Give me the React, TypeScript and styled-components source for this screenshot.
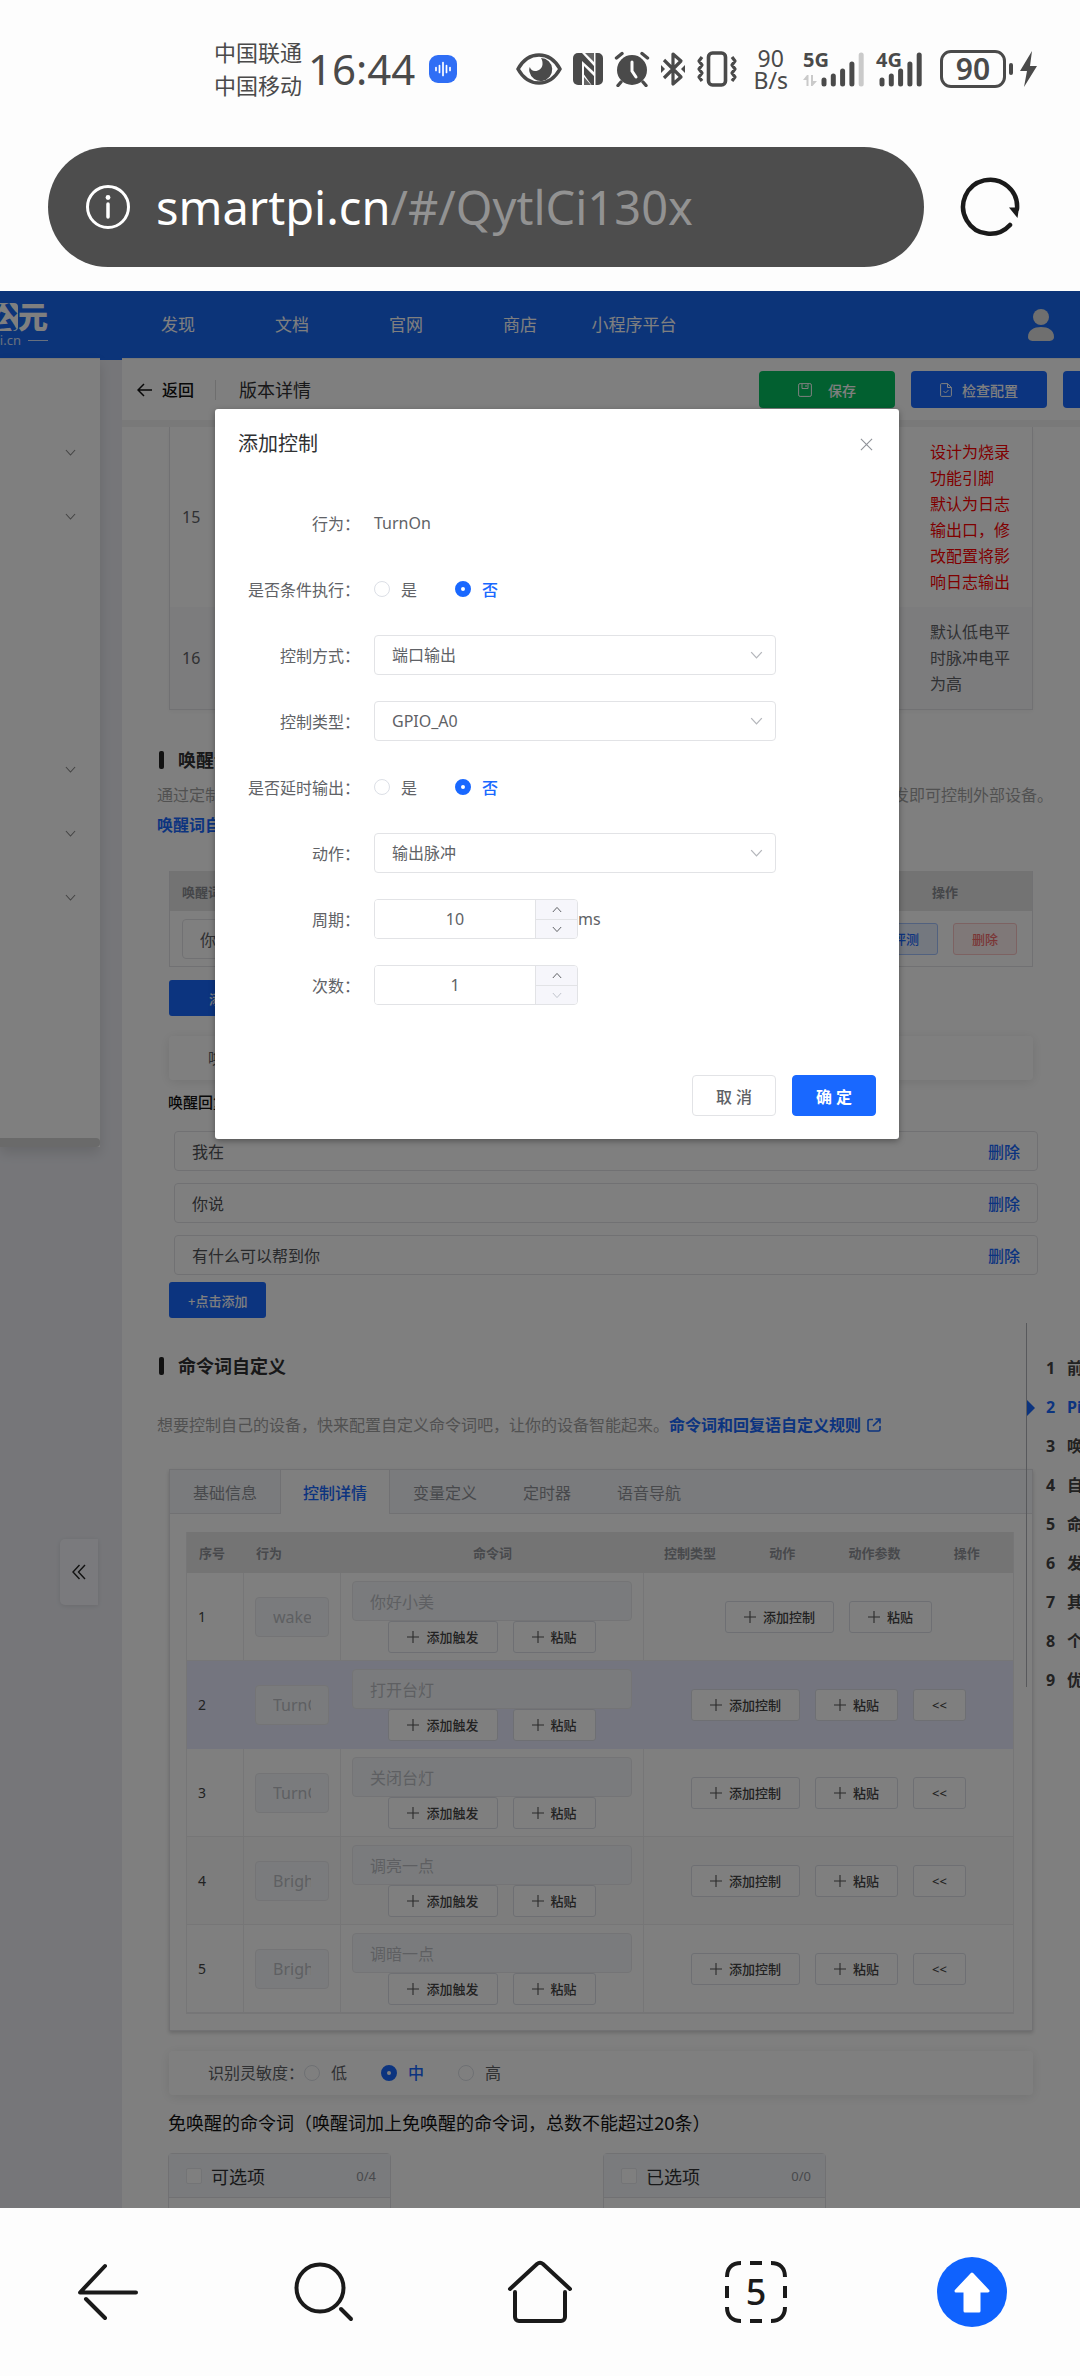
import React, { useState } from "react";
import styled, { createGlobalStyle, css } from "styled-components";

const color = {
  brand: "#1968ff",
  header: "#1868f2",
  text: "#606266",
  dark: "#303133",
  muted: "#a3a3a3",
  line: "#e2e3e6",
  page: "#ecedf3",
  status: "#4a4a4a",
};

const GlobalStyle = createGlobalStyle`
  *, *::before, *::after { box-sizing: border-box; }
  body { margin: 0; background: #fdfdfd; }
  body, button, input, select {
    font-family: "Noto Sans", "Noto Sans CJK SC", sans-serif;
  }
  button { margin: 0; padding: 0; border: 0; background: none; cursor: pointer; }
  table { border-spacing: 0; }
  a { color: inherit; text-decoration: none; }
`;

/* ---------- shell ---------- */

const Shell = styled.div`
  height: 100vh;
  display: flex;
  flex-direction: column;
  background: #fdfdfd;
  overflow: hidden;
`;

const StatusBar = styled.header`
  display: flex;
  align-items: center;
  justify-content: space-between;
  padding: 36px 42px 0 214px;
  height: 102px;
  color: ${color.status};
`;

const StatusGroup = styled.div<{ $gap: number }>`
  display: flex;
  align-items: center;
  gap: ${(p) => p.$gap}px;
`;

const Carriers = styled.div`
  font-size: 22px;
  line-height: 33px;
  white-space: nowrap;
`;

const Clock = styled.time`
  font-size: 42px;
  line-height: 48px;
  margin: 0 14px 0 6px;
`;

const Speed = styled.div`
  font-size: 23px;
  line-height: 22px;
  text-align: center;
  margin: 0 5px;
`;

const Signal = styled.div<{ $width: number }>`
  display: grid;
  width: ${(p) => p.$width}px;
  height: 36px;
  & > * { grid-area: 1 / 1; }
  & > span {
    font-size: 20px;
    font-weight: 700;
    line-height: 18px;
  }
`;

const Battery = styled.div`
  width: 66px;
  height: 38px;
  margin-left: 8px;
  border: 3px solid ${color.status};
  border-radius: 11px;
  font-size: 30px;
  font-weight: 600;
  line-height: 32px;
  text-align: center;
`;

const AddressRow = styled.div`
  display: flex;
  align-items: center;
  gap: 36px;
  padding: 45px 60px 24px 48px;
`;

const Address = styled.div`
  flex: 1;
  display: flex;
  align-items: center;
  gap: 25px;
  height: 120px;
  padding: 0 37px;
  border-radius: 60px;
  background: #4d4d4d;
  color: #fff;
  font-size: 47px;
  line-height: 60px;
  span { color: #929292; }
`;

const IconButton = styled.button`
  display: grid;
  place-items: center;
  line-height: 0;
`;

const BottomBar = styled.nav`
  display: grid;
  grid-template-columns: repeat(5, 1fr);
  height: 168px;
  flex: none;
  background: #fdfdfd;
`;

const TabCount = styled(IconButton)`
  color: #1a1a1a;
  font-size: 36px;
  font-weight: 500;
  line-height: 62px;
  & > * { grid-area: 1 / 1; }
`;

/* ---------- web page ---------- */

const WebView = styled.div`
  position: relative;
  flex: 1;
  min-height: 0;
  overflow: hidden;
  background: ${color.page};
`;

const SiteHeader = styled.div`
  display: flex;
  align-items: center;
  height: 67px;
  padding-right: 26px;
  background: ${color.header};
  color: #fff;
`;

const Logo = styled.div`
  width: 48px;
  margin-right: 73px;
  overflow: hidden;
`;

const LogoName = styled.div`
  display: flex;
  justify-content: flex-end;
  align-items: center;
  font-size: 30px;
  font-weight: 900;
  line-height: 32px;
  white-space: nowrap;
  mark {
    background: #fff;
    color: ${color.header};
    border-radius: 4px;
    line-height: 28px;
  }
`;

const LogoUrl = styled.div`
  display: flex;
  justify-content: flex-end;
  align-items: center;
  gap: 7px;
  font-size: 13px;
  line-height: 15px;
  opacity: 0.8;
  &::after {
    content: "";
    flex: none;
    width: 20px;
    height: 1px;
    background: #fff;
  }
`;

const SiteNav = styled.nav`
  display: flex;
  flex: 1;
  a {
    width: 114px;
    text-align: center;
    font-size: 17px;
    line-height: 24px;
    white-space: nowrap;
  }
`;

const Columns = styled.div`
  display: flex;
  align-items: flex-start;
`;

const Side = styled.aside`
  width: 100px;
  flex: none;
  background: #fff;
  padding-top: 62px;
  border-top: 1px solid #eee;
  box-shadow: 0 6px 12px rgba(0, 0, 0, 0.12);
`;

const SideItem = styled.button`
  display: flex;
  align-items: center;
  justify-content: flex-end;
  width: 100%;
  height: 64px;
  padding-right: 24px;
`;

const SideSubmenu = styled.div`
  height: 189px;
`;

const SideScroll = styled.div`
  height: 9px;
  margin-top: 208px;
  background: #d4d4d4;
  border-radius: 0 4px 4px 0;
`;

const Gutter = styled.div`
  width: 22px;
  flex: none;
  border-top: 2px solid ${color.header};
`;

const Main = styled.main`
  flex: 1;
  min-width: 0;
  background: #fff;
`;

const Toolbar = styled.div`
  display: flex;
  align-items: center;
  height: 62px;
  padding-left: 15px;
  border-top: 1px solid #eef1f3;
  color: #111;
  overflow: hidden;
`;

const Back = styled.a`
  display: flex;
  align-items: center;
  gap: 10px;
  padding-right: 21px;
  border-right: 1px solid #ddd;
  font-size: 16px;
  font-weight: 500;
  line-height: 20px;
`;

const PageName = styled.div`
  flex: 1;
  margin-left: 23px;
  font-size: 18px;
  line-height: 24px;
  color: ${color.dark};
`;

const ToolButton = styled.button<{ $tone: string; $gap: number }>`
  display: flex;
  align-items: center;
  justify-content: center;
  flex: none;
  gap: ${(p) => p.$gap}px;
  width: 136px;
  height: 37px;
  margin-right: 16px;
  border-radius: 4px;
  background: ${(p) => p.$tone};
  color: #fff;
  font-size: 14px;
  font-weight: 500;
`;

const ToolButtons = styled.div`
  display: flex;
  flex: none;
  width: 321px;
`;

const Content = styled.div`
  padding-left: 35px;
  border-top: 7px solid #f3f3f3;
`;

const Block = styled.div<{ $top: number }>`
  margin: ${(p) => p.$top}px 47px 0 12px;
`;

const PinTable = styled.table`
  width: 100%;
  border: 1px solid ${color.line};
  border-top: 0;
  box-shadow: 0 2px 4px rgba(0, 0, 0, 0.04);
  font-size: 16px;
  line-height: 26px;
  color: ${color.text};
  td { padding: 12px; }
  td:first-child { padding-left: 12px; }
  td:last-child { width: 114px; }
  tr:last-child td { background: #f8f8fa; }
`;

const Warning = styled.div`
  color: #ff0000;
`;

const Heading = styled.h2<{ $top: number }>`
  display: flex;
  align-items: center;
  gap: 14px;
  margin: ${(p) => p.$top}px 0 0 2px;
  font-size: 18px;
  font-weight: 700;
  line-height: 26px;
  color: ${color.dark};
  &::before {
    content: "";
    width: 5px;
    height: 18px;
    border-radius: 2px;
    background: #222;
  }
`;

const Intro = styled.p<{ $top: number }>`
  margin: ${(p) => p.$top}px 0 0;
  font-size: 16px;
  line-height: 26px;
  white-space: nowrap;
  color: ${color.muted};
`;

const DocLink = styled.a`
  display: inline-flex;
  align-items: center;
  gap: 6px;
  color: ${color.brand};
  font-size: 16px;
  font-weight: 700;
  line-height: 26px;
`;

const WakeTable = styled.table`
  width: 100%;
  border: 1px solid ${color.line};
  border-top: 0;
  table-layout: fixed;
  th {
    height: 40px;
    padding: 0 12px;
    background: #e6e6e6;
    color: #8a8d92;
    font-size: 13px;
    font-weight: 700;
    text-align: left;
  }
  th:last-child { text-align: center; width: 174px; }
  td { height: 55px; padding: 0 12px; }
`;

const WakeActions = styled.div`
  display: flex;
  justify-content: flex-end;
  gap: 15px;
  padding-right: 3px;
`;

const TagButton = styled.button<{ $danger?: boolean }>`
  width: 64px;
  height: 32px;
  border: 1px solid ${(p) => (p.$danger ? "#fbc4c4" : "#a3c3ff")};
  border-radius: 3px;
  background: ${(p) => (p.$danger ? "#fef0f0" : "#e8f0ff")};
  color: ${(p) => (p.$danger ? "#f56c6c" : color.brand)};
  font-size: 13px;
  font-weight: 500;
`;

const field = css`
  height: 40px;
  border: 1px solid ${color.line};
  border-radius: 4px;
  padding: 0 17px;
  background: #fff;
  color: ${color.text};
  font-size: 16px;
  outline: none;
`;

const TextInput = styled.input`
  ${field}
  display: block;
  width: 100%;
  &:disabled {
    background: #f5f7fa;
    color: #bcbfc5;
    border-color: #e8e9ec;
  }
`;

const Primary = styled.button<{ $pad: number }>`
  display: block;
  height: 36px;
  padding: 0 ${(p) => p.$pad}px;
  border-radius: 3px;
  background: ${color.brand};
  color: #fff;
  font-size: 13px;
  font-weight: 500;
`;

const Panel = styled.div`
  display: flex;
  align-items: center;
  height: 44px;
  padding-left: 39px;
  border-radius: 4px;
  background: #fff;
  box-shadow: 0 2px 12px rgba(0, 0, 0, 0.1);
  font-size: 16px;
  line-height: 24px;
  color: ${color.text};
`;

const ReplyLabel = styled.div`
  margin: 10px 0 17px 11px;
  font-size: 15px;
  font-weight: 500;
  line-height: 24px;
  color: #111;
`;

const Replies = styled.div`
  display: flex;
  flex-direction: column;
  gap: 12px;
  margin: 0 42px 7px 17px;
`;

const Reply = styled.div`
  ${field}
  display: flex;
  align-items: center;
  justify-content: space-between;
  color: #505256;
`;

const TextButton = styled.button`
  color: ${color.brand};
  font-size: 16px;
  font-weight: 500;
`;

const TabCard = styled.div`
  border: 1px solid ${color.line};
  background: #fff;
  box-shadow: 0 2px 4px rgba(0, 0, 0, 0.18);
`;

const TabBar = styled.div`
  display: flex;
  height: 44px;
  background: #f5f7fa;
  border-bottom: 1px solid ${color.line};
`;

const Tab = styled.button<{ $active: boolean }>`
  height: 44px;
  padding: 0 22px;
  border: solid transparent;
  border-width: 0 1px;
  font-size: 16px;
  color: #909399;
  ${(p) =>
    p.$active &&
    css`
      background: #fff;
      border-color: ${color.line};
      color: ${color.brand};
      font-weight: 500;
    `}
`;

const TabBody = styled.div`
  padding: 18px 18px 16px 16px;
`;

const CommandTable = styled.table`
  width: 100%;
  table-layout: fixed;
  border: 1px solid #ececef;
  border-top: 0;
  th {
    height: 41px;
    padding: 0;
    background: #e9e9e9;
    color: #909399;
    font-size: 13px;
    font-weight: 700;
    text-align: center;
  }
  th:nth-child(-n + 2) {
    padding-left: 12px;
    text-align: left;
  }
  td {
    height: 88px;
    padding: 0 11px;
    border-right: 1px solid #ececef;
    border-bottom: 1px solid #ececef;
    font-size: 14px;
    color: #444;
  }
  td:last-child { border-right: 0; }
  tbody tr:nth-child(4) td { background: #fafafa; }
`;

const Row = styled.tr<{ $selected: boolean }>`
  ${(p) =>
    p.$selected &&
    css`
      td { background: #e9ebff; border-color: #e9ebff; }
    `}
`;

const Buttons = styled.div`
  display: flex;
  justify-content: center;
  gap: 15px;
`;

const MiniButton = styled.button`
  display: flex;
  align-items: center;
  gap: 7px;
  height: 32px;
  padding: 0 18px;
  border: 1px solid #dcdfe6;
  border-radius: 3px;
  background: #fff;
  color: #444;
  font-size: 13px;
  font-weight: 500;
  white-space: nowrap;
`;

const FreeTitle = styled.div`
  margin: 15px 0 17px 11px;
  font-size: 18px;
  line-height: 26px;
  color: #111;
`;

const Transfer = styled.div`
  display: flex;
  gap: 212px;
  margin-left: 11px;
`;

const TransferBox = styled.section`
  width: 223px;
  height: 300px;
  border: 1px solid ${color.line};
  border-radius: 4px;
`;

const TransferHead = styled.label`
  display: flex;
  align-items: center;
  height: 44px;
  padding: 0 14px 0 17px;
  background: #f5f7fa;
  border-bottom: 1px solid ${color.line};
  font-size: 18px;
  color: ${color.dark};
  input {
    appearance: none;
    width: 16px;
    height: 16px;
    margin: 0 9px 0 0;
    border: 1px solid #e6e8ec;
    border-radius: 2px;
    background: #fff;
  }
  span {
    margin-left: auto;
    font-size: 13px;
    color: #909399;
  }
`;

const Collapse = styled.button`
  position: absolute;
  left: 60px;
  top: 1248px;
  width: 38px;
  height: 66px;
  display: grid;
  place-items: center;
  border-radius: 5px 0 0 5px;
  background: #f4f5fa;
  box-shadow: 0 1px 5px rgba(0, 0, 0, 0.1);
`;

const Toc = styled.nav`
  position: absolute;
  top: 1032px;
  left: calc(100% - 54px);
  width: 260px;
  height: 364px;
  padding: 26px 0 0 19px;
  border-left: 1px solid #b0b3b8;
  display: flex;
  flex-direction: column;
`;

const TocLink = styled.a<{ $active: boolean }>`
  position: relative;
  display: grid;
  grid-template-columns: 21px 1fr;
  font-size: 16px;
  font-weight: 700;
  line-height: 39px;
  color: ${(p) => (p.$active ? color.brand : "#444")};
  ${(p) =>
    p.$active &&
    css`
      &::before {
        content: "";
        position: absolute;
        left: -19px;
        top: 12px;
        border: 8px solid transparent;
        border-left-color: ${color.brand};
        border-right: 0;
      }
    `}
`;

/* ---------- dialog ---------- */

const Overlay = styled.div`
  position: absolute;
  inset: 0;
  display: flex;
  justify-content: center;
  align-items: flex-start;
  padding: 118px 0 0 34px;
  background: rgba(0, 0, 0, 0.5);
`;

const Dialog = styled.div`
  width: 684px;
  max-width: 100%;
  padding: 20px 23px 23px;
  border-radius: 3px;
  background: #fff;
  box-shadow: 0 2px 6px rgba(0, 0, 0, 0.35);
`;

const DialogHead = styled.div`
  display: flex;
  align-items: center;
  justify-content: space-between;
  height: 30px;
  padding-right: 3px;
  font-size: 20px;
  line-height: 30px;
  color: ${color.dark};
`;

const Form = styled.form`
  display: flex;
  flex-direction: column;
  gap: 26px;
  padding: 44px 100px 70px 0;
`;

const FormRow = styled.div`
  display: grid;
  grid-template-columns: 122px 1fr;
  column-gap: 14px;
  align-items: center;
  height: 40px;
  font-size: 16px;
  color: ${color.text};
`;

const RowLabel = styled.label`
  text-align: right;
  white-space: nowrap;
`;

const RadioGroup = styled.div<{ $gap: number }>`
  display: flex;
  align-items: center;
  gap: ${(p) => p.$gap}px;
`;

const RadioLabel = styled.label<{ $checked: boolean }>`
  display: flex;
  align-items: center;
  gap: 11px;
  color: ${(p) => (p.$checked ? color.brand : color.text)};
  font-weight: ${(p) => (p.$checked ? 500 : 400)};
`;

const Radio = styled.input`
  appearance: none;
  width: 16px;
  height: 16px;
  margin: 0;
  border: 1px solid #dcdfe6;
  border-radius: 50%;
  background: #fff;
  &:checked { border: 6px solid ${color.brand}; }
`;

const SelectBox = styled.div`
  display: grid;
  align-items: center;
  & > * { grid-area: 1 / 1; }
  svg {
    justify-self: end;
    margin-right: 13px;
    pointer-events: none;
  }
`;

const Select = styled.select`
  ${field}
  width: 100%;
  appearance: none;
`;

const NumberRow = styled.div`
  display: flex;
  align-items: center;
`;

const NumberBox = styled.div`
  display: grid;
  grid-template-columns: 1fr 42px;
  width: 204px;
  height: 40px;
  border: 1px solid ${color.line};
  border-radius: 4px;
  overflow: hidden;
  input {
    width: 100%;
    border: 0;
    padding: 0;
    text-align: center;
    font-size: 16px;
    color: ${color.text};
    appearance: textfield;
    outline: none;
  }
  input::-webkit-inner-spin-button { appearance: none; }
`;

const Steps = styled.div`
  display: grid;
  grid-template-rows: 1fr 1fr;
  border-left: 1px solid ${color.line};
  background: #f6f6fb;
  button + button { border-top: 1px solid ${color.line}; }
`;

const DialogFoot = styled.div`
  display: flex;
  justify-content: flex-end;
  gap: 16px;
`;

const DialogButton = styled.button<{ $primary?: boolean }>`
  width: 84px;
  height: 41px;
  border: 1px solid ${(p) => (p.$primary ? color.brand : color.line)};
  border-radius: 4px;
  background: ${(p) => (p.$primary ? color.brand : "#fff")};
  color: ${(p) => (p.$primary ? "#fff" : color.text)};
  font-size: 16px;
  font-weight: ${(p) => (p.$primary ? 700 : 500)};
`;

/* ---------- icons ---------- */

type ChevronProps = { up?: boolean; size?: number; tone?: string };

const Chevron = ({ up, size = 12, tone = "#b4b6bb" }: ChevronProps) => (
  <svg width={size} height={size / 2 + 2} viewBox="0 0 12 8" fill="none" stroke={tone} strokeWidth="1.2">
    <path d={up ? "M1 7 6 1.5 11 7" : "M1 1 6 6.5 11 1"} />
  </svg>
);

const Plus = () => (
  <svg width="12" height="12" viewBox="0 0 12 12" stroke="#555" strokeWidth="1.1">
    <path d="M6 0v12M0 6h12" />
  </svg>
);

const External = () => (
  <svg width="14" height="14" viewBox="0 0 14 14" fill="none" stroke={color.brand} strokeWidth="1.6">
    <path d="M6 1.5H2.5a1.5 1.5 0 0 0-1.5 1.5v8.5a1.5 1.5 0 0 0 1.5 1.5h9a1.5 1.5 0 0 0 1.5-1.5V8M8.5 1H13v4.5M13 1 6 8" />
  </svg>
);

const AppBadge = () => (
  <svg width="28" height="28" viewBox="0 0 28 28">
    <rect width="28" height="28" rx="9" fill="#2f6ef5" />
    <path d="M7 12.5v3M10.500 10.500v7M14 7.500v13M17.500 10.500v7M21 12.500v3" stroke="#fff" strokeWidth="1.7" strokeLinecap="round" />
  </svg>
);

const Eye = () => (
  <svg width="46" height="34" viewBox="0 0 46 34" fill="none">
    <path d="M2 17C7 8 14 3 23 3s16 5 21 14c-5 9-12 14-21 14S7 26 2 17Z" stroke={color.status} strokeWidth="3.6" strokeLinejoin="round" />
    <path d="M25 6a11.500 11.500 0 1 1-11.500 14c-.5-2-.3-3.500.3-5 .9 2.500 2.700 4 5.200 4 4 0 7-2.500 7.500-6.500.2-2.500-.3-4.500-1.500-6.500Z" fill={color.status} />
  </svg>
);

const Nfc = () => (
  <svg width="32" height="34" viewBox="0 0 32 34" fill={color.status}>
    <path d="M6 1h1v32H6a5 5 0 0 1-5-5V6a5 5 0 0 1 5-5Z" />
    <path d="M5 1h2l17 18v-6L11 1h10l3 9V1h2a5 5 0 0 1 5 5v22a5 5 0 0 1-5 5h-2L10 20v6l9 7H7L5 20Z" opacity="0" />
    <path d="M6 1h1.500v32H6ZM9 1l1 0 12 13v6L10 9v24H7.500V1Z" />
    <path d="M12 14l10 10v9h-2.500L12 22.500ZM23.500 1H26a5 5 0 0 1 5 5v22a5 5 0 0 1-5 5h-2.500Z" />
    <path d="M12 25l7 8h-7ZM13 1h9v9Z" opacity=".85" />
  </svg>
);

const Alarm = () => (
  <svg width="36" height="36" viewBox="0 0 36 36" fill="none" strokeLinecap="round">
    <circle cx="18" cy="19" r="15" fill={color.status} />
    <path d="M2.5 7 8 2.5M33.5 7 28 2.5M7 31l-3 3.500M29 31l3 3.500" stroke={color.status} strokeWidth="3.4" />
    <path d="M18 11v9l4 6" stroke="#fdfdfd" strokeWidth="3" />
  </svg>
);

const Bluetooth = () => (
  <svg width="26" height="36" viewBox="0 0 26 36" fill="none" stroke={color.status} strokeWidth="3.2" strokeLinejoin="round">
    <path d="m4 9 17 17-8 7V3l8 7L4 27" />
    <path d="m1 14 4 4-4 4ZM25 14l-4 4 4 4Z" fill={color.status} stroke="none" />
  </svg>
);

const Vibrate = () => (
  <svg width="42" height="36" viewBox="0 0 42 36" fill="none" stroke={color.status}>
    <rect x="12.5" y="2" width="17" height="32" rx="4" strokeWidth="3.6" />
    <path d="m6 6-3 4 3 4-3 4 3 4-3 4 3 4M36 6l3 4-3 4 3 4-3 4 3 4-3 4" strokeWidth="3.2" strokeLinejoin="round" />
  </svg>
);

type BarsProps = { left: number; width: number; faded?: boolean; arrows?: boolean };

const Bars = ({ left, width, faded, arrows }: BarsProps) => (
  <svg width={width} height="36" viewBox={`0 0 ${width} 36`} strokeWidth="5" strokeLinecap="round" stroke={color.status}>
    {[9, 13, 18, 25, 34].map((h, i) => (
      <path
        key={h}
        d={`M${left + i * 9.3} 33V${38 - h}`}
        stroke={faded && i === 4 ? "#cacaca" : color.status}
      />
    ))}
    {arrows && (
      <path d="M0 29 4 24h1.5v11h-2v-6ZM8 24h2v6h4l-4.5 5H8Z" fill="#cacaca" stroke="none" />
    )}
  </svg>
);

const Bolt = () => (
  <svg width="29" height="36" viewBox="0 0 29 36" fill={color.status}>
    <rect x="0" y="12" width="4" height="12" rx="2" />
    <path d="m23 0-12 20h7l-3 16 13-21h-7Z" />
  </svg>
);

const Info = () => (
  <svg width="46" height="46" viewBox="0 0 46 46" fill="none" stroke="#fff">
    <circle cx="23" cy="23" r="20.5" strokeWidth="3" />
    <path d="M23 20v13" strokeWidth="3.5" strokeLinecap="round" />
    <circle cx="23" cy="13.5" r="2.4" fill="#fff" stroke="none" />
  </svg>
);

const Reload = () => (
  <svg width="60" height="60" viewBox="0 0 60 60" fill="none">
    <path d="M50 48a27 27 0 1 1 7-16" stroke="#1a1a1a" strokeWidth="4.5" strokeLinecap="round" />
    <path d="M49 30.5h10L57.5 41Z" fill="#1a1a1a" />
  </svg>
);

const User = () => (
  <svg width="26" height="34" viewBox="0 0 26 34" fill="#dedede">
    <circle cx="13" cy="9" r="8" />
    <path d="M0 29c0-7 6-10 13-10s13 3 13 10c0 3-3 4-5 4H5c-2 0-5-1-5-4Z" />
  </svg>
);

const BackArrow = () => (
  <svg width="15" height="14" viewBox="0 0 15 14" fill="none" stroke="#111" strokeWidth="1.5">
    <path d="M7 1 1 7l6 6M1 7h14" />
  </svg>
);

const Save = () => (
  <svg width="14" height="14" viewBox="0 0 14 14" fill="none" stroke="#fff">
    <rect x=".6" y=".6" width="12.8" height="12.8" rx="1.5" />
    <path d="M4 1v4.5h6V1M8 2v2" />
  </svg>
);

const FileCheck = () => (
  <svg width="12" height="14" viewBox="0 0 12 14" fill="none" stroke="#fff">
    <path d="M7.5.6H1.6a1 1 0 0 0-1 1v10.800a1 1 0 0 0 1 1h8.800a1 1 0 0 0 1-1V4.500ZM7.500.6v3.900h3.900M3.500 8l2 2 3-3" />
  </svg>
);

const navStroke = {
  fill: "none",
  stroke: "#1a1a1a",
  strokeWidth: 4,
  strokeLinecap: "round" as const,
  strokeLinejoin: "round" as const,
};

/* ---------- data ---------- */

const pageSections = [
  "前端信号处理",
  "Pin脚配置",
  "唤醒词自定义",
  "自学习配置",
  "命令词自定义",
  "发音人配置",
  "其他配置",
  "个性化音频",
  "优化配置",
];

const commands = [
  { action: "wakeup_uni", phrase: "你好小美" },
  { action: "TurnOn", phrase: "打开台灯" },
  { action: "TurnOff", phrase: "关闭台灯" },
  { action: "BrightnessUp", phrase: "调亮一点" },
  { action: "BrightnessDown", phrase: "调暗一点" },
];

const tabs = ["基础信息", "控制详情", "变量定义", "定时器", "语音导航"];

/* ---------- parts ---------- */

type ChoiceProps = { name: string; options: string[]; initial: string; gap: number };

function Choice({ name, options, initial, gap }: ChoiceProps) {
  const [value, setValue] = useState(initial);
  return (
    <RadioGroup role="radiogroup" aria-label={name} $gap={gap}>
      {options.map((o) => (
        <RadioLabel key={o} $checked={o === value}>
          <Radio type="radio" name={name} checked={o === value} onChange={() => setValue(o)} />
          {o}
        </RadioLabel>
      ))}
    </RadioGroup>
  );
}

function SelectField({ id, label, option }: { id: string; label: string; option: string }) {
  return (
    <FormRow>
      <RowLabel htmlFor={id}>{label}：</RowLabel>
      <SelectBox>
        <Select id={id}>
          <option>{option}</option>
        </Select>
        <Chevron size={13} />
      </SelectBox>
    </FormRow>
  );
}

type NumberFieldProps = { id: string; label: string; initial: number; unit?: string };

function NumberField({ id, label, initial, unit }: NumberFieldProps) {
  const [value, setValue] = useState(initial);
  return (
    <FormRow>
      <RowLabel htmlFor={id}>{label}：</RowLabel>
      <NumberRow>
        <NumberBox>
          <input id={id} type="number" value={value} onChange={(e) => setValue(Number(e.target.value))} />
          <Steps>
            <IconButton type="button" aria-label="增加" onClick={() => setValue(value + 1)}>
              <Chevron up size={10} tone="#606266" />
            </IconButton>
            <IconButton type="button" aria-label="减少" disabled={value <= 1} onClick={() => setValue(value - 1)}>
              <Chevron size={10} tone={value <= 1 ? "#c0c4cc" : "#606266"} />
            </IconButton>
          </Steps>
        </NumberBox>
        {unit}
      </NumberRow>
    </FormRow>
  );
}

function ControlDialog() {
  return (
    <Overlay>
      <Dialog role="dialog" aria-modal="true" aria-label="添加控制">
        <DialogHead>
          添加控制
          <IconButton aria-label="关闭">
            <svg width="13" height="13" viewBox="0 0 14 14" stroke="#909399" strokeWidth="1.2">
              <path d="m1 1 12 12M13 1 1 13" />
            </svg>
          </IconButton>
        </DialogHead>
        <Form>
          <FormRow>
            <RowLabel as="span">行为：</RowLabel>
            <span>TurnOn</span>
          </FormRow>
          <FormRow>
            <RowLabel as="span">是否条件执行：</RowLabel>
            <Choice name="conditional" options={["是", "否"]} initial="否" gap={38} />
          </FormRow>
          <SelectField id="mode" label="控制方式" option="端口输出" />
          <SelectField id="port" label="控制类型" option="GPIO_A0" />
          <FormRow>
            <RowLabel as="span">是否延时输出：</RowLabel>
            <Choice name="delayed" options={["是", "否"]} initial="否" gap={38} />
          </FormRow>
          <SelectField id="act" label="动作" option="输出脉冲" />
          <NumberField id="period" label="周期" initial={10} unit="ms" />
          <NumberField id="times" label="次数" initial={1} />
        </Form>
        <DialogFoot>
          <DialogButton>取 消</DialogButton>
          <DialogButton $primary>确 定</DialogButton>
        </DialogFoot>
      </Dialog>
    </Overlay>
  );
}

function Commands() {
  return (
    <CommandTable>
      <colgroup>
        <col style={{ width: 57 }} />
        <col style={{ width: 97 }} />
        <col style={{ width: 303 }} />
        <col />
        <col />
        <col />
        <col />
      </colgroup>
      <thead>
        <tr>
          {["序号", "行为", "命令词", "控制类型", "动作", "动作参数", "操作"].map((h) => (
            <th key={h}>{h}</th>
          ))}
        </tr>
      </thead>
      <tbody>
        {commands.map((c, i) => (
          <Row key={c.action} $selected={i === 1}>
            <td>{i + 1}</td>
            <td>
              <TextInput aria-label="行为" disabled value={c.action} />
            </td>
            <td>
              <TextInput aria-label="命令词" disabled value={c.phrase} />
              <Buttons>
                <MiniButton><Plus />添加触发</MiniButton>
                <MiniButton><Plus />粘贴</MiniButton>
              </Buttons>
            </td>
            <td colSpan={4}>
              <Buttons>
                <MiniButton><Plus />添加控制</MiniButton>
                <MiniButton><Plus />粘贴</MiniButton>
                {i > 0 && <MiniButton>{"<<"}</MiniButton>}
              </Buttons>
            </td>
          </Row>
        ))}
      </tbody>
    </CommandTable>
  );
}

function SitePage() {
  const [tab, setTab] = useState("控制详情");
  return (
    <>
      <SiteHeader>
        <Logo>
          <LogoName>智能<mark>公</mark>元</LogoName>
          <LogoUrl>smartpi.cn</LogoUrl>
        </Logo>
        <SiteNav>
          {["发现", "文档", "官网", "商店", "小程序平台"].map((n) => (
            <a href="#" key={n}>{n}</a>
          ))}
        </SiteNav>
        <User />
      </SiteHeader>
      <Columns>
        <Side>
          <SideItem aria-label="产品"><Chevron tone="#888" size={11} /></SideItem>
          <SideItem aria-label="版本"><Chevron tone="#888" size={11} /></SideItem>
          <SideSubmenu />
          <SideItem aria-label="工具"><Chevron tone="#888" size={11} /></SideItem>
          <SideItem aria-label="资源"><Chevron tone="#888" size={11} /></SideItem>
          <SideItem aria-label="帮助"><Chevron tone="#888" size={11} /></SideItem>
          <SideScroll />
        </Side>
        <Gutter />
        <Main>
          <Toolbar>
            <Back href="#"><BackArrow />返回</Back>
            <PageName>版本详情</PageName>
            <ToolButtons>
              <ToolButton $tone="#05c160" $gap={16}><Save />保存</ToolButton>
              <ToolButton $tone={color.brand} $gap={10}><FileCheck />检查配置</ToolButton>
              <ToolButton $tone={color.brand} $gap={10} aria-label="生成固件" />
            </ToolButtons>
          </Toolbar>
          <Content>
            <Block $top={0}>
              <PinTable>
                <tbody>
                  <tr>
                    <td>15</td>
                    <td>
                      <Warning>设计为烧录功能引脚</Warning>
                      <Warning>默认为日志输出口，修改配置将影响日志输出</Warning>
                    </td>
                  </tr>
                  <tr>
                    <td>16</td>
                    <td>默认低电平时脉冲电平为高</td>
                  </tr>
                </tbody>
              </PinTable>
            </Block>
            <Heading $top={37}>唤醒词自定义</Heading>
            <Intro $top={9}>
              通过定制唤醒词，为您的设备取一个专属的名字，再添加控制动作，说出唤醒词就能让模块响应，语音触发即可控制外部设备。
            </Intro>
            <Intro $top={4}>
              <DocLink href="#">唤醒词自定义规则<External /></DocLink>
            </Intro>
            <Block $top={33}>
              <WakeTable>
                <thead>
                  <tr><th>唤醒词</th><th>操作</th></tr>
                </thead>
                <tbody>
                  <tr>
                    <td><TextInput aria-label="唤醒词" defaultValue="你好小美" /></td>
                    <td>
                      <WakeActions>
                        <TagButton>评测</TagButton>
                        <TagButton $danger>删除</TagButton>
                      </WakeActions>
                    </td>
                  </tr>
                </tbody>
              </WakeTable>
            </Block>
            <Block $top={13}><Primary $pad={40}>添加唤醒词</Primary></Block>
            <Block $top={20}><Panel>唤醒灵敏度：</Panel></Block>
            <ReplyLabel>唤醒回复语</ReplyLabel>
            <Replies>
              {["我在", "你说", "有什么可以帮到你"].map((r) => (
                <Reply key={r}>{r}<TextButton>删除</TextButton></Reply>
              ))}
            </Replies>
            <Block $top={0}><Primary $pad={19}>+点击添加</Primary></Block>
            <Heading $top={35}>命令词自定义</Heading>
            <Intro $top={33}>
              想要控制自己的设备，快来配置自定义命令词吧，让你的设备智能起来。
              <DocLink href="#">命令词和回复语自定义规则<External /></DocLink>
            </Intro>
            <Block $top={31}>
              <TabCard>
                <TabBar>
                  {tabs.map((t) => (
                    <Tab key={t} $active={t === tab} onClick={() => setTab(t)}>{t}</Tab>
                  ))}
                </TabBar>
                <TabBody><Commands /></TabBody>
              </TabCard>
            </Block>
            <Block $top={20}>
              <Panel>
                识别灵敏度：
                <Choice name="sensitivity" options={["低", "中", "高"]} initial="中" gap={34} />
              </Panel>
            </Block>
            <FreeTitle>免唤醒的命令词（唤醒词加上免唤醒的命令词，总数不能超过20条）</FreeTitle>
            <Transfer>
              <TransferBox>
                <TransferHead><input type="checkbox" />可选项<span>0/4</span></TransferHead>
              </TransferBox>
              <TransferBox>
                <TransferHead><input type="checkbox" />已选项<span>0/0</span></TransferHead>
              </TransferBox>
            </Transfer>
          </Content>
        </Main>
      </Columns>
      <Collapse aria-label="收起">
        <svg width="14" height="16" viewBox="0 0 14 16" fill="none" stroke="#222" strokeWidth="1.4">
          <path d="M7.5 1 1 8l6.500 7M13 1 6.500 8l6.500 7" />
        </svg>
      </Collapse>
      <Toc>
        {pageSections.map((s, i) => (
          <TocLink href="#" key={s} $active={i === 1}><span>{i + 1}</span>{s}</TocLink>
        ))}
      </Toc>
    </>
  );
}

export default function App() {
  return (
    <Shell lang="zh-CN">
      <GlobalStyle />
      <StatusBar>
        <StatusGroup $gap={0}>
          <Carriers>中国联通<br />中国移动</Carriers>
          <Clock>16:44</Clock>
          <AppBadge />
        </StatusGroup>
        <StatusGroup $gap={10}>
          <Eye />
          <Nfc />
          <Alarm />
          <Bluetooth />
          <Vibrate />
          <Speed>90<br />B/s</Speed>
          <Signal $width={63}><span>5G</span><Bars width={63} left={21} faded arrows /></Signal>
          <Signal $width={46}><span>4G</span><Bars width={46} left={6} /></Signal>
          <StatusGroup $gap={3}>
            <Battery>90</Battery>
            <Bolt />
          </StatusGroup>
        </StatusGroup>
      </StatusBar>
      <AddressRow>
        <Address>
          <Info />
          <div>smartpi.cn<span>/#/QytlCi130x</span></div>
        </Address>
        <IconButton aria-label="刷新"><Reload /></IconButton>
      </AddressRow>
      <WebView>
        <SitePage />
        <ControlDialog />
      </WebView>
      <BottomBar>
        <IconButton aria-label="后退">
          <svg width="62" height="62" viewBox="0 0 62 62" {...navStroke}>
            <path d="M59 31.5H3L28 5M9 38l19 19" />
          </svg>
        </IconButton>
        <IconButton aria-label="搜索">
          <svg width="62" height="62" viewBox="0 0 62 62" {...navStroke}>
            <circle cx="27" cy="27" r="23.5" />
            <path d="m48 48 10 10" />
          </svg>
        </IconButton>
        <IconButton aria-label="主页">
          <svg width="66" height="64" viewBox="0 0 66 64" {...navStroke}>
            <path d="M3 29 30 4q3-2.500 6 0l27 25" />
            <path d="M8 32v25a4 4 0 0 0 4 4h42a4 4 0 0 0 4-4V32" />
          </svg>
        </IconButton>
        <TabCount aria-label="标签页">
          <svg width="62" height="62" viewBox="0 0 62 62" {...navStroke} strokeLinecap="butt">
            <path d="M2 16C2 7 7 2 16 2M46 2c9 0 14 5 14 14M60 46c0 9-5 14-14 14M16 60C7 60 2 55 2 46M25 2h12M25 60h12M2 25v12M60 25v12" />
          </svg>
          <span>5</span>
        </TabCount>
        <IconButton aria-label="回到顶部">
          <svg width="70" height="70" viewBox="0 0 70 70">
            <circle cx="35" cy="35" r="35" fill="#0f62fe" />
            <path d="M35 17 51 34H42V54H28V34H19Z" fill="#fff" stroke="#fff" strokeWidth="3" strokeLinejoin="round" />
          </svg>
        </IconButton>
      </BottomBar>
    </Shell>
  );
}
